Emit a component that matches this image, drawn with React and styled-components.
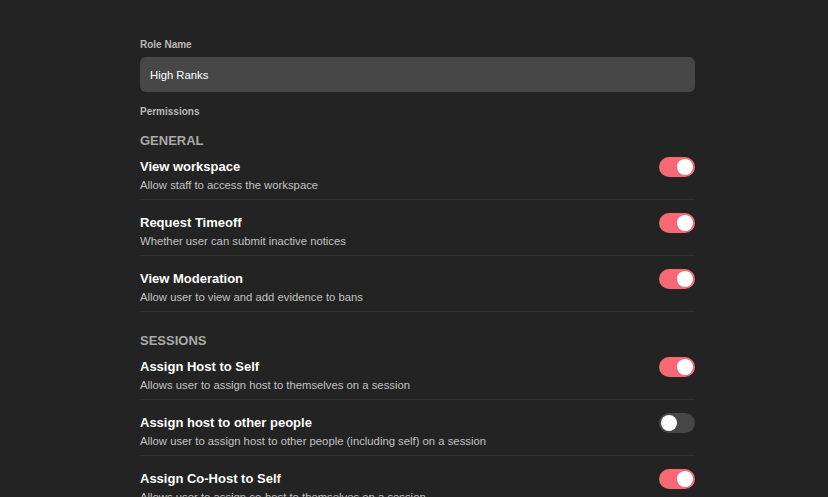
import React, { useState } from "react";
import styled, { createGlobalStyle } from "styled-components";

const GlobalStyle = createGlobalStyle`
  html, body {
    margin: 0;
    background: #232323;
    font-family: "Liberation Sans", Arial, sans-serif;
    color: #fff;
  }
  * { box-sizing: border-box; }
`;

const Page = styled.div`
  padding: 38px 0 40px 140px;
`;

const Form = styled.div`
  width: 555px;
  display: flex;
  flex-direction: column;
`;

const Label = styled.div`
  font-size: 10px;
  line-height: 13px;
  font-weight: 700;
  color: #b8b8b8;
  margin-bottom: ${(p) => p.$gap || 0}px;
`;

const Input = styled.input`
  height: 35px;
  width: 100%;
  border: none;
  outline: none;
  border-radius: 6px;
  background: #474747;
  color: #fff;
  padding: 0 10px;
  font-family: inherit;
  font-size: 11.3px;
  margin-bottom: 13px;
`;

const Section = styled.div`
  margin-top: ${(p) => p.$top}px;
`;

const SectionTitle = styled.div`
  font-size: 13px;
  line-height: 16px;
  font-weight: 700;
  color: #a9a9a9;
  margin-bottom: 8px;
`;

const Row = styled.div`
  display: flex;
  justify-content: space-between;
  align-items: flex-start;
  padding: 0 0 6px;
  border-bottom: 1px solid #313131;

  & + & {
    padding-top: 13px;
  }
`;

const Text = styled.div`
  display: flex;
  flex-direction: column;
  gap: 1px;
`;

const Title = styled.div`
  font-size: 13px;
  line-height: 19px;
  font-weight: 700;
  color: #fff;
`;

const Desc = styled.div`
  font-size: 11.3px;
  line-height: 16px;
  color: #c2c2c2;
`;

const Track = styled.button`
  position: relative;
  flex: none;
  width: 36px;
  height: 20px;
  border: none;
  padding: 0;
  border-radius: 10px;
  cursor: pointer;
  background: ${(p) => (p.$on ? "#f66a75" : "#474747")};
`;

const Knob = styled.span`
  position: absolute;
  top: 2px;
  left: ${(p) => (p.$on ? 18 : 2)}px;
  width: 16px;
  height: 16px;
  border-radius: 50%;
  background: #fff;
  transition: left 0.15s;
`;

function Toggle({ initial }) {
  const [on, setOn] = useState(initial);
  return (
    <Track $on={on} onClick={() => setOn(!on)}>
      <Knob $on={on} />
    </Track>
  );
}

const sections = [
  {
    name: "GENERAL",
    top: 15,
    items: [
      ["View workspace", "Allow staff to access the workspace", true],
      ["Request Timeoff", "Whether user can submit inactive notices", true],
      ["View Moderation", "Allow user to view and add evidence to bans", true],
    ],
  },
  {
    name: "SESSIONS",
    top: 21,
    items: [
      ["Assign Host to Self", "Allows user to assign host to themselves on a session", true],
      [
        "Assign host to other people",
        "Allow user to assign host to other people (including self) on a session",
        false,
      ],
      ["Assign Co-Host to Self", "Allows user to assign co-host to themselves on a session", true],
    ],
  },
];

export default function App() {
  return (
    <Page>
      <GlobalStyle />
      <Form>
        <Label $gap={6}>Role Name</Label>
        <Input defaultValue="High Ranks" />
        <Label>Permissions</Label>
        {sections.map((s) => (
          <Section key={s.name} $top={s.top}>
            <SectionTitle>{s.name}</SectionTitle>
            {s.items.map(([title, desc, on]) => (
              <Row key={title}>
                <Text>
                  <Title>{title}</Title>
                  <Desc>{desc}</Desc>
                </Text>
                <Toggle initial={on} />
              </Row>
            ))}
          </Section>
        ))}
      </Form>
    </Page>
  );
}
